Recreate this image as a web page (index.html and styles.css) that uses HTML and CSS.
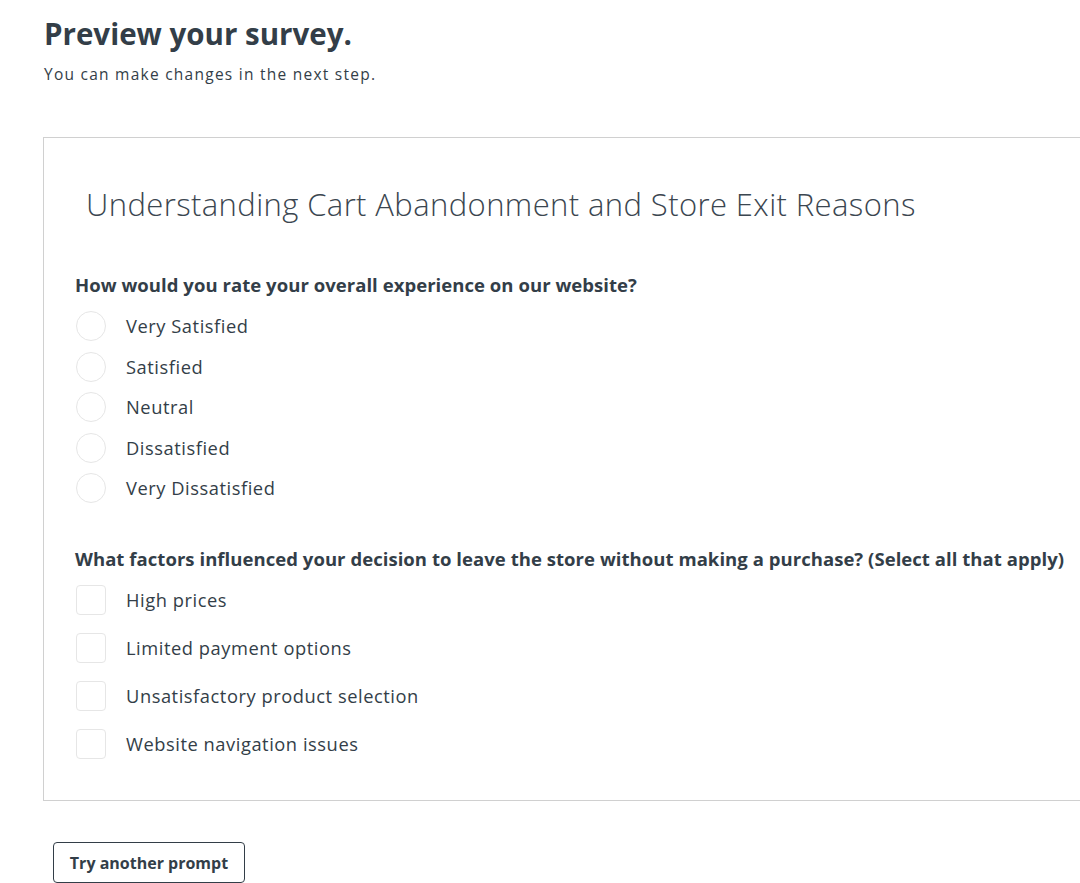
FILE: index.html
```html
<!DOCTYPE html>
<html lang="en">
<head>
<meta charset="utf-8">
<title>Preview your survey</title>
<link rel="stylesheet" href="styles.css">
</head>
<body>
<div class="page">
  <header class="head">
    <h1 class="title">Preview your survey.</h1>
    <p class="subtitle">You can make changes in the next step.</p>
  </header>
  <section class="card">
    <h2 class="survey-title">Understanding Cart Abandonment and Store Exit Reasons</h2>
    <div class="question">
      <h3 class="q-text">How would you rate your overall experience on our website?</h3>
      <ul class="options radios">
        <li class="option"><span class="radio"></span><span class="label">Very Satisfied</span></li>
        <li class="option"><span class="radio"></span><span class="label">Satisfied</span></li>
        <li class="option"><span class="radio"></span><span class="label">Neutral</span></li>
        <li class="option"><span class="radio"></span><span class="label">Dissatisfied</span></li>
        <li class="option"><span class="radio"></span><span class="label">Very Dissatisfied</span></li>
      </ul>
    </div>
    <div class="question">
      <h3 class="q-text">What factors influenced your decision to leave the store without making a purchase? (Select all that apply)</h3>
      <ul class="options checks">
        <li class="option"><span class="check"></span><span class="label">High prices</span></li>
        <li class="option"><span class="check"></span><span class="label">Limited payment options</span></li>
        <li class="option"><span class="check"></span><span class="label">Unsatisfactory product selection</span></li>
        <li class="option"><span class="check"></span><span class="label">Website navigation issues</span></li>
      </ul>
    </div>
  </section>
  <div class="actions">
    <button class="btn" type="button">Try another prompt</button>
  </div>
</div>
</body>
</html>
```
FILE: styles.css
```css
* { box-sizing: border-box; }
html, body { margin: 0; padding: 0; background: #fff; }
body {
  font-family: "Open Sans", "Noto Sans", sans-serif;
  color: #333e48;
  overflow: hidden;
}
.page {
  width: 1120px;
  padding: 16px 0 0 43px;
}
.head { padding-left: 1px; }
.title {
  margin: 0;
  font-size: 29.5px;
  line-height: 36px;
  font-weight: 700;
}
.subtitle {
  margin: 11px 0 0;
  font-size: 15.5px;
  line-height: 22px;
  font-weight: 400;
  letter-spacing: 1.25px;
}
.card {
  margin-top: 52px;
  border: 1px solid #d0d0d0;
  border-right: none;
  padding: 44px 0 41px 31px;
}
.survey-title {
  margin: 0 0 46px 11px;
  font-size: 31px;
  line-height: 44px;
  font-weight: 300;
  letter-spacing: 0.4px;
  color: #3b4650;
}
.question { margin-bottom: 43px; }
.question:last-child { margin-bottom: 0; }
.q-text {
  margin: 0 0 13px;
  font-size: 18.5px;
  line-height: 26px;
  font-weight: 700;
  letter-spacing: 0.05px;
}
.options { list-style: none; margin: 0; padding: 0; display: flex; flex-direction: column; }
.radios { gap: 10.5px; }
.checks { gap: 18px; }
.option { display: flex; align-items: center; gap: 20px; height: 30px; }
.radio, .check {
  flex: none;
  width: 30px;
  height: 30px;
  border: 1px solid #e6e6e6;
  margin-left: 1px;
}
.radio { border-radius: 50%; }
.check { border-radius: 4px; }
.label { font-size: 18.3px; line-height: 24px; letter-spacing: 0.55px; color: #333e48; }
.actions { padding: 41px 0 0 10px; }
.btn {
  font-family: inherit;
  font-size: 16px;
  font-weight: 700;
  color: #333e48;
  background: #fff;
  border: 1px solid #333e48;
  border-radius: 4px;
  height: 41px;
  width: 192px;
  padding: 0;
}
```
